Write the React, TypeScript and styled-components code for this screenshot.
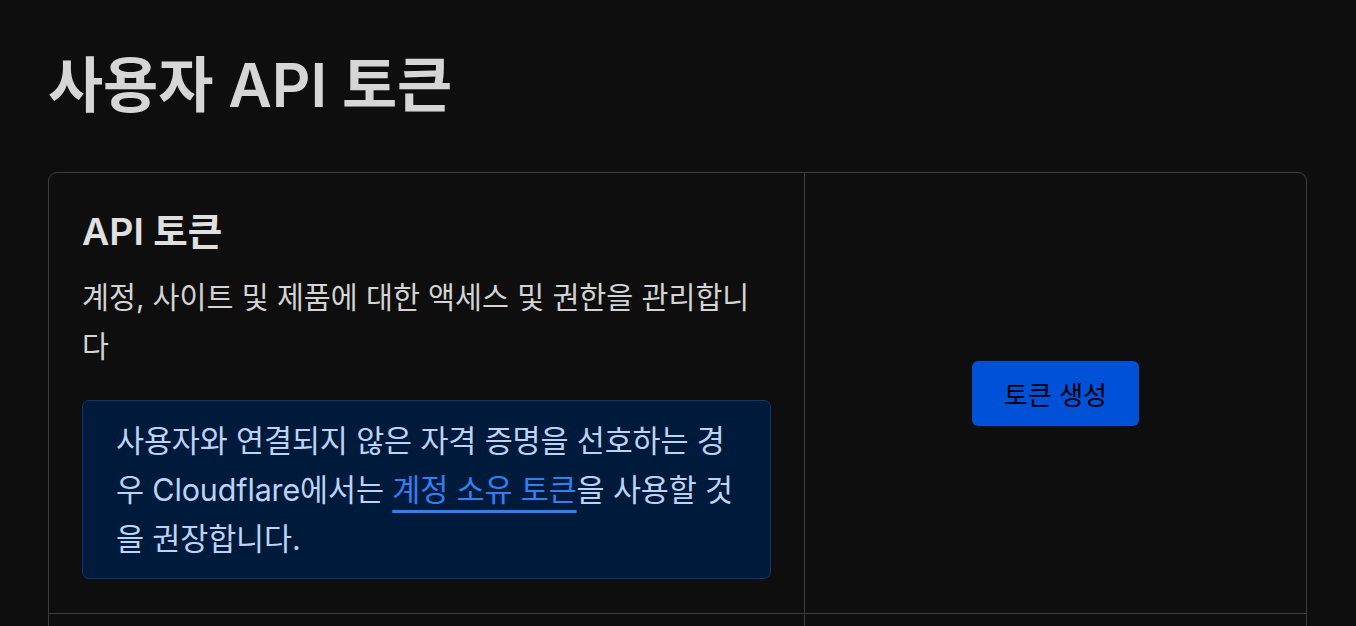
import styled, {createGlobalStyle} from "styled-components";

const GlobalStyle = createGlobalStyle`
  html, body {
    margin: 0;
    padding: 0;
    background: #0e0e0e;
    overflow: hidden;
  }
  body {
    font-family: Inter, "Noto Sans CJK KR", sans-serif;
    color: #d9d9d9;
  }
`

const Page = styled.main`
  padding: 51px 49px 0 48px;
`

const PageTitle = styled.h1`
  margin: 0;
  font-size: 60px;
  line-height: 68px;
  font-weight: 600;
  color: #d6d6d6;
  letter-spacing: -0.1px;
`

const Card = styled.section`
  margin-top: 53px;
  border: 1px solid #3c3c3c;
  border-radius: 9px;
  overflow: hidden;
`

const Row = styled.div<{ $minHeight?: number }>`
  display: grid;
  grid-template-columns: 755px 1fr;
  border-bottom: 1px solid #3c3c3c;
  min-height: ${p => p.$minHeight ?? 0}px;
`

const Info = styled.div`
  padding: 33px 33px 34px 33px;
`

const Actions = styled.div`
  border-left: 1px solid #3c3c3c;
  display: flex;
  align-items: center;
  justify-content: center;
`

const CardTitle = styled.h2`
  margin: 0;
  font-size: 37.5px;
  line-height: 52px;
  font-weight: 600;
  color: #e0e0e0;
`

const Description = styled.p`
  margin: 15px 0 0;
  font-size: 29.3px;
  line-height: 49px;
  color: #d4d4d4;
  max-width: 705px;
`

const Callout = styled.div`
  margin-top: 29px;
  background: #001a3b;
  border: 1px solid #0b3672;
  border-radius: 7px;
  padding: 15px 33px 15px;
  font-size: 30.5px;
  line-height: 49px;
  letter-spacing: -0.15px;
  color: #bcd3f6;
`

const Link = styled.a`
  color: #2f80f2;
  text-decoration: underline;
  text-decoration-thickness: 3px;
  text-underline-offset: 9px;
  text-decoration-color: #2f80f2;
`

const PrimaryButton = styled.button`
  font-family: inherit;
  font-size: 26px;
  height: 65px;
  padding: 0 32px;
  background: #0051d8;
  color: #000;
  border: 0;
  border-radius: 6px;
  cursor: pointer;
`

const App = () => {
    return (<>
        <GlobalStyle/>
        <Page>
            <PageTitle>사용자 API 토큰</PageTitle>
            <Card>
                <Row>
                    <Info>
                        <CardTitle>API 토큰</CardTitle>
                        <Description>계정, 사이트 및 제품에 대한 액세스 및 권한을 관리합니다</Description>
                        <Callout>
                            사용자와 연결되지 않은 자격 증명을 선호하는 경우 Cloudflare에서는 <Link href="#">계정 소유 토큰</Link>을 사용할 것을 권장합니다.
                        </Callout>
                    </Info>
                    <Actions>
                        <PrimaryButton>토큰 생성</PrimaryButton>
                    </Actions>
                </Row>
                <Row $minHeight={120}>
                    <Info/>
                    <Actions/>
                </Row>
            </Card>
        </Page>
    </>)
}

export default App
